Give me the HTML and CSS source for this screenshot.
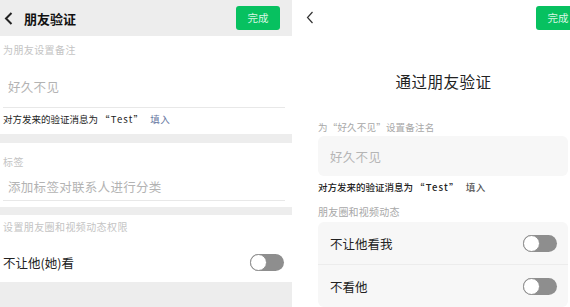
FILE: index.html
```html
<!DOCTYPE html>
<html>
<head>
    <meta charset="utf-8">
    <link rel="stylesheet" href="styles.css">
</head>
<body>
    <div class="screens">

        <!-- old version -->
        <div class="screen old">
            <div class="bar">
                <svg class="back thick" width="9" height="13" viewBox="0 0 9 13"><path d="M7.5 1 L2 6.5 L7.5 12" /></svg>
                <span class="bar-title">朋友验证</span>
                <span class="done">完成</span>
            </div>

            <div class="block">
                <div class="hint first">为朋友设置备注</div>
                <div class="field remark">好久不见</div>
                <div class="msg">对方发来的验证消息为<span class="quote">“Test”</span><span class="fill">填入</span></div>
            </div>
            <div class="band"></div>

            <div class="block tags-block">
                <div class="hint tag">标签</div>
                <div class="field tags">添加标签对联系人进行分类</div>
            </div>
            <div class="band thin"></div>

            <div class="block">
                <div class="hint perm">设置朋友圈和视频动态权限</div>
                <div class="row">
                    <span>不让他(她)看</span>
                    <span class="switch"></span>
                </div>
            </div>
            <div class="foot"></div>
        </div>

        <!-- new version -->
        <div class="screen new">
            <div class="bar plain">
                <svg class="back" width="8" height="13" viewBox="0 0 8 13"><path d="M6.5 1 L1.5 6.5 L6.5 12" /></svg>
                <span class="done">完成</span>
            </div>

            <h1>通过朋友验证</h1>

            <div class="content">
                <div class="hint">为“好久不见”设置备注名</div>
                <div class="box">好久不见</div>
                <div class="msg">对方发来的验证消息为<span class="quote">“Test”</span><span class="fill">填入</span></div>

                <div class="hint moments">朋友圈和视频动态</div>
                <div class="card">
                    <div class="card-row">
                        <span>不让他看我</span>
                        <span class="switch"></span>
                    </div>
                    <div class="card-row">
                        <span>不看他</span>
                        <span class="switch"></span>
                    </div>
                </div>
            </div>
        </div>

    </div>
</body>
</html>
```

FILE: styles.css
```css
body {
    margin: 0;
    background-color: white;
    font-family: "Noto Sans CJK SC", "Noto Sans", sans-serif;
    color: #222;
}

.screens {
    display: flex;
    gap: 8px;
    width: 570px;
    height: 307px;
    overflow: hidden;
}

.screen {
    flex-shrink: 0;
    display: flex;
    flex-direction: column;
    height: 307px;
}

.old {
    width: 292px;
}

.new {
    width: 287px;
}

/* top bar */
.bar {
    display: flex;
    align-items: center;
    height: 36px;
    background-color: #ededed;
}

.bar.plain {
    background-color: white;
}

.back {
    margin-left: 4px;
    fill: none;
    stroke: #333;
    stroke-width: 1.2;
}

.back.thick {
    stroke: #222;
    stroke-width: 2;
}

.plain .back {
    margin-left: 6px;
}

.bar-title {
    margin-left: 11px;
    font-size: 13px;
    font-weight: bold;
    color: #111;
}

.done {
    margin-left: auto;
    margin-right: 12px;
    width: 44px;
    height: 24px;
    line-height: 24px;
    text-align: center;
    border-radius: 3px;
    background-color: #07c160;
    color: #d9f7e4;
    font-size: 10.5px;
}

.plain .done {
    margin-right: 7px;
}

/* old screen */
.block {
    padding: 0 7px 0 3px;
}

.hint {
    font-size: 10px;
    line-height: 14px;
    color: #c4c4c4;
    letter-spacing: 0.4px;
}

.hint.first {
    margin-top: 7px;
}

.hint.tag {
    margin-top: 12px;
}

.hint.perm {
    margin-top: 5px;
}

.field {
    font-size: 12.5px;
    line-height: 16px;
    color: #b3b3b3;
    border-bottom: 1px solid #e8e8e8;
    letter-spacing: 0.3px;
}

.field.remark {
    padding: 22px 5px 12px;
}

.field.tags {
    padding: 10px 5px 5px;
}

.tags-block {
    padding-bottom: 6px;
}

.msg {
    margin-top: 4px;
    font-size: 9.5px;
    line-height: 14px;
    color: #222;
    padding-bottom: 8px;
}

.quote {
    margin: 0 2px;
    letter-spacing: 1.2px;
}

.fill {
    margin-left: 4px;
    color: #6a7aa3;
    letter-spacing: 0.5px;
}

.new .fill {
    color: #555;
}

.band {
    height: 9px;
    background-color: #ededed;
}

.band.thin {
    height: 8px;
}

.row {
    display: flex;
    align-items: center;
    justify-content: space-between;
    height: 40px;
    padding: 8px 1px 0 0;
    font-size: 12.5px;
    color: #222;
}

.foot {
    flex: 1;
    background-color: #ededed;
}

/* switch, off state */
.switch {
    position: relative;
    width: 34px;
    height: 17px;
    border-radius: 9px;
    background-color: #8e8e8e;
}

.switch::after {
    content: "";
    position: absolute;
    left: 0;
    top: 0;
    width: 17px;
    height: 17px;
    box-sizing: border-box;
    border-radius: 50%;
    border: 1.5px solid #8e8e8e;
    background-color: white;
}

/* new screen */
h1 {
    margin: 35px 0 0;
    font-size: 15.5px;
    font-weight: normal;
    line-height: 22px;
    text-align: center;
    color: #222;
    letter-spacing: 0.5px;
}

.content {
    padding: 0 19px 0 18px;
}

.new .hint {
    margin-top: 28px;
    font-size: 9.5px;
    color: #a8a8a8;
    letter-spacing: 0.2px;
}

.new .hint.moments {
    margin-top: 11px;
    font-size: 10px;
}

.box {
    display: flex;
    align-items: center;
    margin-top: 2px;
    height: 40px;
    padding-left: 12px;
    border-radius: 6px;
    background-color: #f7f7f7;
    font-size: 12.5px;
    color: #b5b5b5;
    letter-spacing: 0.3px;
}

.new .msg {
    padding-bottom: 0;
    font-weight: 500;
}

.card {
    margin-top: 3px;
    border-radius: 6px;
    background-color: #f7f7f7;
}

.card-row {
    display: flex;
    align-items: center;
    justify-content: space-between;
    height: 42px;
    padding: 0 11px 0 12px;
    font-size: 12.5px;
    color: #222;
}

.card-row + .card-row {
    border-top: 1px solid #ececec;
}
```
